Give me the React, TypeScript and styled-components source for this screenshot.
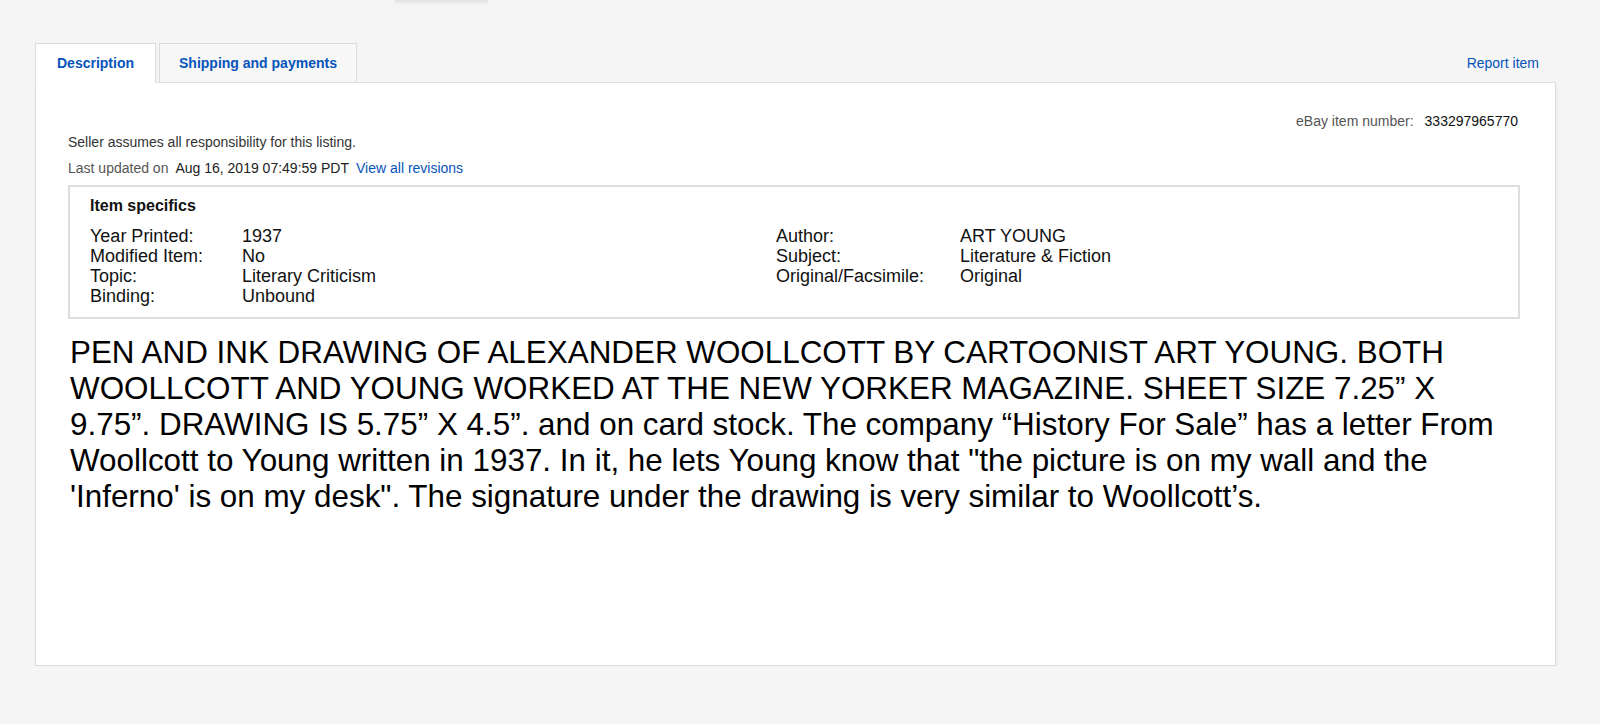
import React from 'react';
import styled, { createGlobalStyle } from 'styled-components';

const GlobalStyle = createGlobalStyle`
  body {
    margin: 0;
    background: #f5f5f5;
    font-family: 'Liberation Sans', Arial, Helvetica, sans-serif;
    color: #111;
  }
`;

const Page = styled.div`
  padding: 0 44px 0 35px;
`;

const TopStub = styled.div`
  margin-left: 360px;
  width: 93px;
  height: 2px;
  background: #e4e4e4;
  box-shadow: 0 1px 2px rgba(0, 0, 0, 0.08);
`;

const TabBar = styled.div`
  margin-top: 41px;
  display: flex;
  align-items: flex-end;
  justify-content: space-between;
`;

const Tabs = styled.div`
  display: flex;
  gap: 3px;
`;

const Tab = styled.div<{ $active?: boolean }>`
  height: 40px;
  box-sizing: border-box;
  padding: 0 ${(p) => (p.$active ? 21 : 19)}px;
  display: flex;
  align-items: center;
  font-size: 14px;
  font-weight: bold;
  color: #0654ba;
  background: ${(p) => (p.$active ? '#fff' : '#f7f7f7')};
  border: 1px solid #dcdcdc;
  border-bottom: ${(p) => (p.$active ? '1px solid #fff' : '1px solid #dcdcdc')};
  margin-bottom: -1px;
  position: relative;
  z-index: 1;
`;

const Link = styled.span`
  color: #0654ba;
`;

const ReportLink = styled(Link)`
  font-size: 14px;
  padding: 0 17px 11px 0;
`;

const Panel = styled.div`
  background: #fff;
  border: 1px solid #dcdcdc;
  box-shadow: 1px 2px 3px rgba(0, 0, 0, 0.06);
  min-height: 584px;
  box-sizing: border-box;
  padding: 30px 35px 40px 32px;
`;

const ItemNumber = styled.div`
  text-align: right;
  font-size: 14px;
  line-height: 17px;
  padding-right: 2px;
  color: #555;

  & b {
    font-weight: normal;
    color: #111;
    margin-left: 11px;
  }
`;

const Note = styled.div<{ $gap?: number }>`
  font-size: 14px;
  line-height: 17px;
  color: #333;
  margin-top: ${(p) => p.$gap ?? 0}px;
`;

const Muted = styled.span`
  color: #555;
  margin-right: 7px;
`;

const Date = styled.span`
  color: #222;
  margin-right: 7px;
`;

const Specifics = styled.div`
  margin-top: 8px;
  border: 2px solid #dedede;
  padding: 9px 21px 11px 20px;
`;

const SpecTitle = styled.div`
  font-size: 16px;
  font-weight: bold;
  line-height: 20px;
  margin-bottom: 10px;
`;

const SpecGrid = styled.div`
  display: grid;
  grid-template-columns: 152px 534px 184px 1fr;
  grid-template-rows: repeat(4, 20px);
  font-size: 18px;
  line-height: 20px;
  color: #111;
`;

const Cell = styled.div<{ $col: number; $row: number }>`
  grid-column: ${(p) => p.$col};
  grid-row: ${(p) => p.$row};
  white-space: nowrap;
`;

const Description = styled.p`
  margin: 16px 15px 0 2px;
  font-size: 31.4px;
  line-height: 36px;
  color: #000;
`;

const left = [
  ['Year Printed:', '1937'],
  ['Modified Item:', 'No'],
  ['Topic:', 'Literary Criticism'],
  ['Binding:', 'Unbound'],
];

const right = [
  ['Author:', 'ART YOUNG'],
  ['Subject:', 'Literature & Fiction'],
  ['Original/Facsimile:', 'Original'],
];

export default function App() {
  return (
    <>
      <GlobalStyle />
      <Page>
        <TopStub />
        <TabBar>
          <Tabs>
            <Tab $active>Description</Tab>
            <Tab>Shipping and payments</Tab>
          </Tabs>
          <ReportLink>Report item</ReportLink>
        </TabBar>
        <Panel>
          <ItemNumber>
            eBay item number:<b>333297965770</b>
          </ItemNumber>
          <Note $gap={4}>Seller assumes all responsibility for this listing.</Note>
          <Note $gap={9}>
            <Muted>Last updated on</Muted>
            <Date>Aug 16, 2019 07:49:59 PDT</Date>
            <Link>View all revisions</Link>
          </Note>
          <Specifics>
            <SpecTitle>Item specifics</SpecTitle>
            <SpecGrid>
              {left.map(([k, v], i) => (
                <React.Fragment key={k}>
                  <Cell $col={1} $row={i + 1}>{k}</Cell>
                  <Cell $col={2} $row={i + 1}>{v}</Cell>
                </React.Fragment>
              ))}
              {right.map(([k, v], i) => (
                <React.Fragment key={k}>
                  <Cell $col={3} $row={i + 1}>{k}</Cell>
                  <Cell $col={4} $row={i + 1}>{v}</Cell>
                </React.Fragment>
              ))}
            </SpecGrid>
          </Specifics>
          <Description>
            PEN AND INK DRAWING OF ALEXANDER WOOLLCOTT BY CARTOONIST ART YOUNG. BOTH
            WOOLLCOTT AND YOUNG WORKED AT THE NEW YORKER MAGAZINE. SHEET SIZE 7.25” X
            9.75”. DRAWING IS 5.75” X 4.5”. and on card stock. The company “History For
            Sale” has a letter From Woollcott to Young written in 1937. In it, he lets
            Young know that "the picture is on my wall and the 'Inferno' is on my desk".
            The signature under the drawing is very similar to Woollcott’s.
          </Description>
        </Panel>
      </Page>
    </>
  );
}
